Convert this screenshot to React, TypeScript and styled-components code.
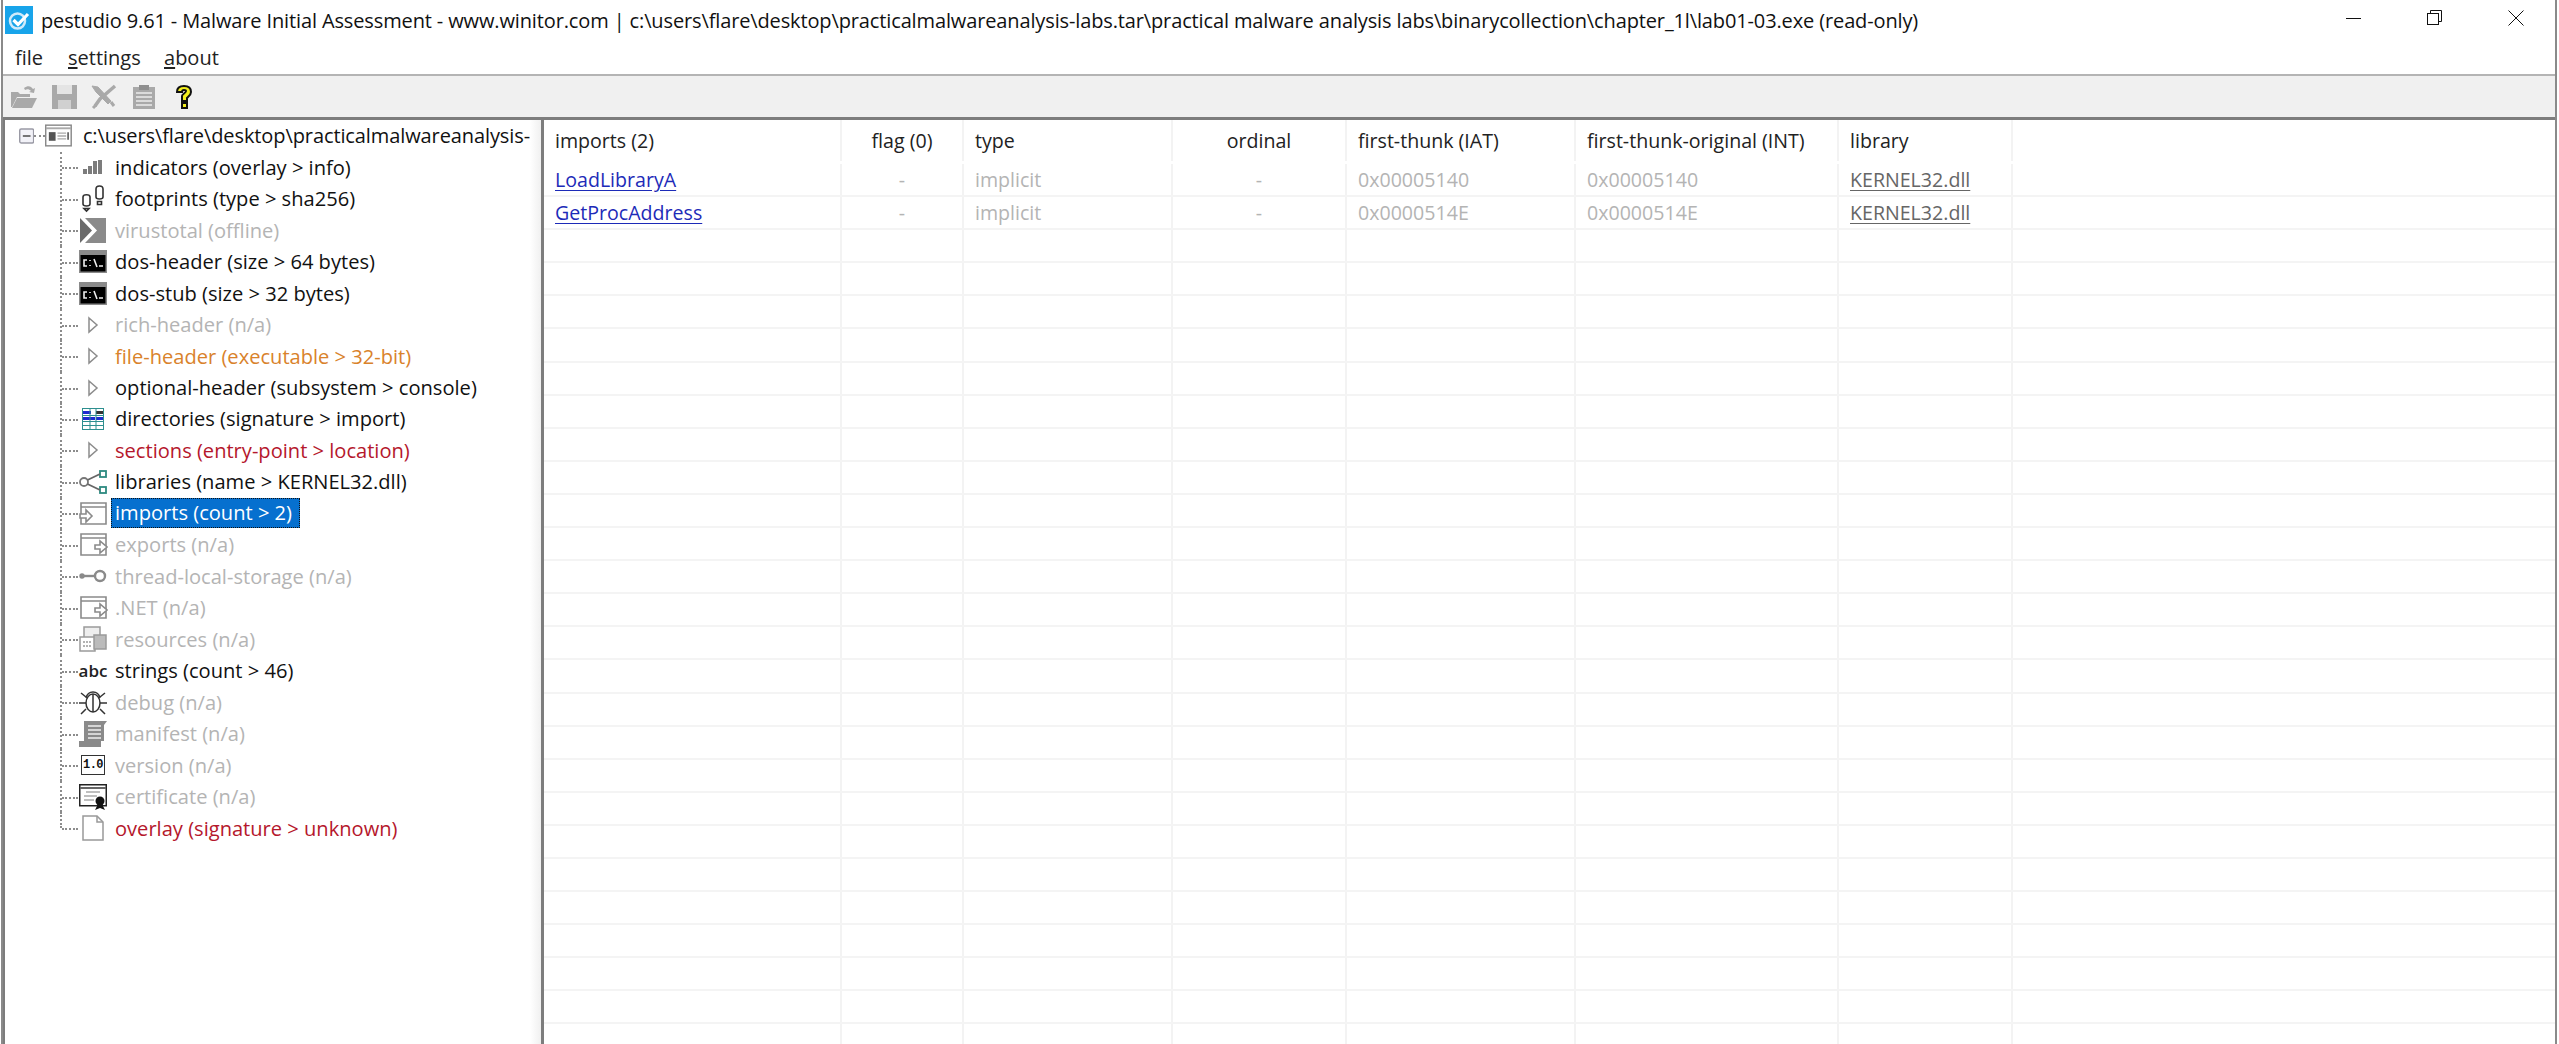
import React from 'react'
import styled, { createGlobalStyle } from 'styled-components'

const Global = createGlobalStyle`
  html, body { margin: 0; padding: 0; background: #fff; overflow: hidden; }
  body { font-family: "Open Sans", "Noto Sans", "Liberation Sans", sans-serif; color: #111; }
`
const Window = styled.div`
  width: 2559px;
  height: 1044px;
  display: flex;
  flex-direction: column;
  box-sizing: border-box;
  padding: 0 3px 0 2px;
  overflow: hidden;
  background: #fff;
  position: relative;
  &::before, &::after {
    content: '';
    position: absolute;
    top: 0;
    bottom: 0;
    width: 2px;
    background: #8a8a8a;
  }
  &::before { left: 1px; }
  &::after { right: 2px; }
`
const TitleBar = styled.div`
  height: 40px;
  flex: none;
  display: flex;
  align-items: center;
  padding-left: 3px;
  font-size: 20px;
  letter-spacing: -0.13px;
  white-space: nowrap;
  color: #111;
`
const TitleText = styled.span`
  margin-left: 8px;
  flex: 1;
`
const WinButtons = styled.div`
  display: flex;
  align-items: center;
  margin: 0 32px 4px 0;
  gap: 65px;
`
const MenuBar = styled.div`
  height: 36px;
  flex: none;
  display: flex;
  align-items: center;
  padding-left: 13px;
  gap: 19px;
  font-size: 20px;
  box-sizing: border-box;
  border-bottom: 2px solid #b4b4b4;
`
const MenuItem = styled.span<{ $w: number }>`
  width: ${p => p.$w}px;
  color: #222;
  u { text-underline-offset: 2px; }
`
const Toolbar = styled.div`
  height: 41px;
  flex: none;
  background: #f0f0f0;
  display: flex;
  align-items: center;
  padding-left: 2px;
  box-sizing: border-box;
`
const ToolSlot = styled.div`
  width: 40px;
  display: flex;
  justify-content: center;
`
const Panes = styled.div`
  flex: 1;
  min-height: 0;
  display: flex;
  background: #f4f4f4;
`
const TreePane = styled.div`
  width: 528px;
  flex: none;
  background: #fff;
  box-sizing: border-box;
  border-top: 3px solid #7d7d7d;
  border-left: 3px solid #7d7d7d;
`
const Gap = styled.div`
  width: 11px;
  flex: none;
  background: linear-gradient(to right, #fff, #f0f0f0);
  border-top: 3px solid #7d7d7d;
`
const ListPane = styled.div`
  flex: 1;
  min-width: 0;
  background: #fff;
  box-sizing: border-box;
  border-top: 3px solid #7d7d7d;
  border-left: 3px solid #7d7d7d;
  overflow: hidden;
`
const RootRow = styled.div`
  height: 31.5px;
  display: flex;
  align-items: center;
  font-size: 20px;
  letter-spacing: -0.1px;
  padding-left: 14px;
  white-space: nowrap;
  overflow: hidden;
  color: #111;
`
const RootStub = styled.span`
  width: 11px;
  border-top: 2px dotted #8c8c8c;
`
const RootLabel = styled.span`
  margin-left: 11px;
`
const TreeList = styled.div`
  display: flex;
  flex-direction: column;
`
const TreeRow = styled.div<{ $last?: boolean }>`
  height: 31.47px;
  display: flex;
  align-items: center;
  position: relative;
  padding-left: 73px;
  font-size: 20.1px;
  white-space: nowrap;
  &::before {
    content: '';
    position: absolute;
    left: 55px;
    top: 0;
    height: ${p => (p.$last ? '50%' : '100%')};
    border-left: 2px dotted #8c8c8c;
  }
  &::after {
    content: '';
    position: absolute;
    left: 57px;
    width: 16px;
    top: 50%;
    border-top: 2px dotted #8c8c8c;
  }
`
const IconSlot = styled.div`
  width: 30px;
  height: 28px;
  flex: none;
  display: flex;
  align-items: center;
  justify-content: center;
`
const TreeLabel = styled.span<{ $tone: string; $selected?: boolean }>`
  margin-left: ${p => (p.$selected ? '3px' : '7px')};
  color: ${p => (p.$selected ? '#fff' : p.$tone)};
  ${p =>
    p.$selected
      ? `background:#0670cf; outline: 1px dotted #111; outline-offset:-1px; padding: 0 8px 0 4px; line-height: 30px;`
      : ''}
`
const GridRow = styled.div<{ $head?: boolean }>`
  display: grid;
  grid-template-columns: 298px 122px 209px 174px 229px 263px 174px 1fr;
  height: ${p => (p.$head ? '44px' : '33.1px')};
  padding-bottom: ${p => (p.$head ? '3px' : '0')};
  box-sizing: border-box;
  border-bottom: ${p => (p.$head ? '0' : '2px solid #f4f4f4')};
  font-size: 19.6px;
  color: #222;
`
const Cell = styled.div<{ $center?: boolean; $tone?: string; $open?: boolean }>`
  display: flex;
  align-items: center;
  justify-content: ${p => (p.$center ? 'center' : 'flex-start')};
  padding-left: ${p => (p.$center ? '0' : '11px')};
  border-right: ${p => (p.$open ? '0' : '2px solid #f3f3f3')};
  color: ${p => p.$tone || 'inherit'};
  white-space: nowrap;
  overflow: hidden;
`
const FnLink = styled.span`
  color: #1d2bb8;
  text-decoration: underline;
  text-underline-offset: 3px;
`
const LibLink = styled.span`
  color: #666;
  text-decoration: underline;
  text-underline-offset: 3px;
`

const G = '#a9a9a9'

const Minimize = () => (
  <svg width="16" height="16" viewBox="0 0 16 16"><path d="M0 8.5h15" stroke="#111" strokeWidth="1" /></svg>
)
const Restore = () => (
  <svg width="16" height="16" viewBox="0 0 16 16" fill="none" stroke="#111" strokeWidth="1">
    <rect x="0.5" y="3.5" width="11" height="11" />
    <path d="M3.5 3.5V0.5h11v11h-3" />
  </svg>
)
const CloseIcon = () => (
  <svg width="16" height="16" viewBox="0 0 16 16"><path d="M0.5 0.5l15 15M15.5 0.5l-15 15" stroke="#111" strokeWidth="1" /></svg>
)
const AppIcon = () => (
  <svg width="28" height="28" viewBox="0 0 28 28">
    <rect width="28" height="28" fill="#18a4ea" />
    <circle cx="12.5" cy="15" r="7.5" fill="none" stroke="#cfeafa" strokeWidth="2.5" />
    <path d="M8.5 14l4.5 4.5L23 8" fill="none" stroke="#fff" strokeWidth="3.2" />
  </svg>
)
const OpenIcon = () => (
  <svg width="28" height="26" viewBox="0 0 28 26" fill={G}>
    <path d="M1 8h7l2 2h10v3H7l-5 10H1z" />
    <path d="M7 14h20l-5 10H2z" />
    <path d="M14 4c4-3 7-2 9 1l2-1-1 5-5-1 2-1c-2-2-4-2-6-1z" />
  </svg>
)
const SaveIcon = () => (
  <svg width="25" height="25" viewBox="0 0 25 25">
    <path d="M0 1h25v24H0z" fill={G} />
    <rect x="5" y="1" width="15" height="9" fill="#e4e4e4" />
    <rect x="6" y="16" width="13" height="9" fill="#d0d0d0" />
  </svg>
)
const CutIcon = () => (
  <svg width="26" height="26" viewBox="0 0 26 26" fill="none" stroke={G}>
    <path d="M1 2l6 1 13 14-3 3L5 8z" fill={G} strokeWidth="1" />
    <path d="M24 2L9 15l-5 7" strokeWidth="3.5" />
    <path d="M2 24l3-3M20 18l3 4" strokeWidth="3" />
  </svg>
)
const ClipIcon = () => (
  <svg width="22" height="24" viewBox="0 0 22 24">
    <rect x="0" y="2" width="22" height="22" fill={G} />
    <rect x="6" y="0" width="10" height="5" fill="#8f8f8f" />
    <path d="M3 8h16M3 12h16M3 16h16M3 20h16" stroke="#ececec" strokeWidth="1.5" />
  </svg>
)
const HelpIcon = () => (
  <svg width="20" height="26" viewBox="0 0 20 26">
    <path
      d="M3 8c0-4 3-6 7-6s7 2 7 6c0 3-2 4-4 6v3H8v-5c0-2 4-3 4-5 0-1-1-1-2-1S8 6 8 8zM8 19h5v5H8z"
      fill="#f2ee1e"
      stroke="#111"
      strokeWidth="2"
    />
  </svg>
)
const MinusBox = () => (
  <svg width="16" height="16" viewBox="0 0 16 16">
    <rect x="0.75" y="0.75" width="14.5" height="14.5" rx="1.5" fill="#f2f2f8" stroke="#9a9aa5" strokeWidth="1.5" />
    <path d="M4 8h8" stroke="#444" strokeWidth="1.5" />
  </svg>
)
const RootIcon = () => (
  <svg width="28" height="23" viewBox="0 0 28 23">
    <rect x="0.75" y="0.75" width="26.5" height="21.5" fill="#fff" stroke="#8a8a8a" strokeWidth="1.5" />
    <path d="M1 4h26" stroke="#aaa" strokeWidth="2" />
    <rect x="4" y="8" width="7" height="9" fill="#555" />
    <path d="M13 9h9M13 12h9M13 15h9" stroke="#aaa" strokeWidth="1.5" />
    <path d="M24 8v8" stroke="#444" strokeWidth="1.5" />
  </svg>
)
const Indicators = () => (
  <svg width="20" height="14" viewBox="0 0 20 14" fill="#7c7c7c">
    <rect x="0" y="9" width="4" height="5" /><rect x="5" y="6" width="4" height="8" />
    <rect x="10" y="1" width="4" height="13" /><rect x="15" y="0" width="4" height="14" />
  </svg>
)
const Footprints = () => (
  <svg width="24" height="28" viewBox="0 0 24 28" fill="none" stroke="#333" strokeWidth="1.6">
    <path d="M2 12c0-3 7-3 7 0v7c0 1-1 2-3.500 2S2 20 2 19zM3 23.500h5l-2.500 2.500z" />
    <path d="M15 4c0-4 7-4 7 0v8c0 1-1 2-3.500 2S15 13 15 12zM16.500 16.500h4v3h-4z" />
  </svg>
)
const VirusTotal = () => (
  <svg width="26" height="25" viewBox="0 0 26 25" fill="#6a6a6a">
    <path d="M0 0l12 12.500L0 25z" />
    <path d="M5 0h21v25H5l12-12.500z" fill="#8a8a8a" />
  </svg>
)
const Console = () => (
  <svg width="28" height="23" viewBox="0 0 28 23">
    <rect width="28" height="23" fill="#8a8a8a" />
    <rect x="1.5" y="5" width="25" height="16.500" fill="#000" />
    <path d="M8 10H5v6h3M11 10v1M11 15v1M15 9l3 8M20 16h4" stroke="#eee" strokeWidth="1.6" fill="none" />
  </svg>
)
const Arrow = () => (
  <svg width="12" height="18" viewBox="0 0 12 18">
    <path d="M2 2l8 7-8 7z" fill="#fff" stroke="#8c8c8c" strokeWidth="1.5" />
  </svg>
)
const Directories = () => (
  <svg width="22" height="22" viewBox="0 0 22 22">
    <rect x="0.5" y="0.5" width="21" height="21" fill="#fff" stroke="#2d8f8f" />
    <rect x="1" y="3" width="8" height="3" fill="#1c2bd0" /><rect x="1" y="9" width="12" height="3" fill="#1c2bd0" />
    <rect x="14" y="3" width="7" height="3" fill="#333" /><rect x="14" y="9" width="7" height="3" fill="#1c2bd0" />
    <path d="M1 7.500h20M1 13.500h20M1 17.500h20M8 1v20M14 1v20" stroke="#2d8f8f" />
  </svg>
)
const Libraries = () => (
  <svg width="28" height="24" viewBox="0 0 28 24" fill="none" stroke="#2d8a80" strokeWidth="1.8">
    <rect x="21" y="1" width="6" height="6" /><rect x="21" y="17" width="6" height="6" />
    <circle cx="5" cy="12" r="4" stroke="#777" />
    <path d="M8.500 10L21 4M8.500 14L21 20" stroke="#666" />
  </svg>
)
const PageIcon = ({ imp }: { imp?: boolean }) => (
  <svg width="29" height="23" viewBox="0 0 29 23" fill="none" stroke="#8a8a8a" strokeWidth="1.6">
    <path d="M2 1h25v21H2zM2 5h25" />
    <path
      d={imp ? 'M1 12h6V8l6 6-6 6v-4H1z' : 'M16 12h5V8l7 6-7 6v-4h-5z'}
      fill="#fff"
    />
  </svg>
)
const Key = () => (
  <svg width="28" height="14" viewBox="0 0 28 14" fill="none" stroke="#8a8a8a" strokeWidth="2.4">
    <circle cx="21" cy="7" r="5" />
    <path d="M2 7h14" />
    <circle cx="3" cy="7" r="1.500" />
  </svg>
)
const Resources = () => (
  <svg width="28" height="26" viewBox="0 0 28 26" fill="none" stroke="#9a9a9a" strokeWidth="1.5">
    <rect x="5" y="1" width="16" height="12" fill="#eee" />
    <rect x="1" y="11" width="15" height="14" fill="#fff" />
    <path d="M4 16h9M4 20h9" strokeDasharray="2 1" />
    <rect x="15" y="9" width="12" height="14" fill="#bbb" />
  </svg>
)
const Bug = () => (
  <svg width="30" height="26" viewBox="0 0 30 26" fill="none" stroke="#333" strokeWidth="1.5">
    <ellipse cx="15" cy="14" rx="7" ry="9" />
    <path d="M8 9c1-4 3-6 7-6s6 2 7 6M15 5v18M8 8L3 4M22 8l5-4M8 14H1M22 14h7M8 20l-5 5M22 20l5 5" />
  </svg>
)
const Manifest = () => (
  <svg width="28" height="26" viewBox="0 0 28 26" fill="#8a8a8a">
    <path d="M5 0h23l-3 4v16H5z" />
    <path d="M9 5h13M9 9h13M9 13h13M9 17h13" stroke="#eee" strokeWidth="1.5" />
    <path d="M0 20h22v6H0z" />
  </svg>
)
const VersionBox = styled.span`
  width: 24px;
  height: 20px;
  box-sizing: border-box;
  border: 1.5px solid #333;
  background: #fff;
  font: bold 12px "Liberation Mono", monospace;
  letter-spacing: -0.5px;
  color: #111;
  display: flex;
  align-items: center;
  justify-content: center;
`
const Certificate = () => (
  <svg width="28" height="26" viewBox="0 0 28 26">
    <rect x="0.75" y="0.75" width="26.5" height="21" fill="#fff" stroke="#222" strokeWidth="1.5" />
    <path d="M1 4h26" stroke="#666" strokeWidth="2" />
    <path d="M7 8h14M5 12h13M5 16h10" stroke="#aaa" strokeWidth="1.5" />
    <circle cx="21" cy="17" r="4.500" fill="#111" />
    <path d="M16 26l3-6h4l3 6-5-2z" fill="#111" />
  </svg>
)
const FileIcon = () => (
  <svg width="22" height="26" viewBox="0 0 22 26">
    <path d="M1 1h14l6 6v18H1z" fill="#fff" stroke="#999" strokeWidth="1.5" />
    <path d="M15 1v6h6" fill="none" stroke="#999" strokeWidth="1.5" />
  </svg>
)
const Abc = styled.span`
  font-size: 17px;
  font-weight: 600;
  color: #222;
`

const BLACK = '#111'
const GREY = '#b4b4b4'
const RED = '#b5172c'
const ORANGE = '#d9822b'

const tree: { label: string; tone: string; icon: React.ReactNode; selected?: boolean }[] = [
  { label: 'indicators (overlay > info)', tone: BLACK, icon: <Indicators /> },
  { label: 'footprints (type > sha256)', tone: BLACK, icon: <Footprints /> },
  { label: 'virustotal (offline)', tone: GREY, icon: <VirusTotal /> },
  { label: 'dos-header (size > 64 bytes)', tone: BLACK, icon: <Console /> },
  { label: 'dos-stub (size > 32 bytes)', tone: BLACK, icon: <Console /> },
  { label: 'rich-header (n/a)', tone: GREY, icon: <Arrow /> },
  { label: 'file-header (executable > 32-bit)', tone: ORANGE, icon: <Arrow /> },
  { label: 'optional-header (subsystem > console)', tone: BLACK, icon: <Arrow /> },
  { label: 'directories (signature > import)', tone: BLACK, icon: <Directories /> },
  { label: 'sections (entry-point > location)', tone: RED, icon: <Arrow /> },
  { label: 'libraries (name > KERNEL32.dll)', tone: BLACK, icon: <Libraries /> },
  { label: 'imports (count > 2)', tone: BLACK, icon: <PageIcon imp />, selected: true },
  { label: 'exports (n/a)', tone: GREY, icon: <PageIcon /> },
  { label: 'thread-local-storage (n/a)', tone: GREY, icon: <Key /> },
  { label: '.NET (n/a)', tone: GREY, icon: <PageIcon /> },
  { label: 'resources (n/a)', tone: GREY, icon: <Resources /> },
  { label: 'strings (count > 46)', tone: BLACK, icon: <Abc>abc</Abc> },
  { label: 'debug (n/a)', tone: GREY, icon: <Bug /> },
  { label: 'manifest (n/a)', tone: GREY, icon: <Manifest /> },
  { label: 'version (n/a)', tone: GREY, icon: <VersionBox>1.0</VersionBox> },
  { label: 'certificate (n/a)', tone: GREY, icon: <Certificate /> },
  { label: 'overlay (signature > unknown)', tone: RED, icon: <FileIcon /> },
]

const imports = [
  { name: 'LoadLibraryA', iat: '0x00005140', int: '0x00005140' },
  { name: 'GetProcAddress', iat: '0x0000514E', int: '0x0000514E' },
]
const emptyRows = Array.from({ length: 25 }, (_, i) => i)

export default function App() {
  return (
    <Window>
      <Global />
      <TitleBar>
        <AppIcon />
        <TitleText>
          pestudio 9.61 - Malware Initial Assessment - www.winitor.com | c:\users\flare\desktop\practicalmalwareanalysis-labs.tar\practical malware analysis labs\binarycollection\chapter_1l\lab01-03.exe (read-only)
        </TitleText>
        <WinButtons>
          <Minimize />
          <Restore />
          <CloseIcon />
        </WinButtons>
      </TitleBar>
      <MenuBar>
        <MenuItem $w={34}>file</MenuItem>
        <MenuItem $w={77}><u>s</u>ettings</MenuItem>
        <MenuItem $w={60}><u>a</u>bout</MenuItem>
      </MenuBar>
      <Toolbar>
        <ToolSlot><OpenIcon /></ToolSlot>
        <ToolSlot><SaveIcon /></ToolSlot>
        <ToolSlot><CutIcon /></ToolSlot>
        <ToolSlot><ClipIcon /></ToolSlot>
        <ToolSlot><HelpIcon /></ToolSlot>
      </Toolbar>
      <Panes>
        <TreePane>
          <RootRow>
            <MinusBox />
            <RootStub />
            <RootIcon />
            <RootLabel>c:\users\flare\desktop\practicalmalwareanalysis-</RootLabel>
          </RootRow>
          <TreeList>
            {tree.map((n, i) => (
              <TreeRow key={n.label} $last={i === tree.length - 1}>
                <IconSlot>{n.icon}</IconSlot>
                <TreeLabel $tone={n.tone} $selected={n.selected}>{n.label}</TreeLabel>
              </TreeRow>
            ))}
          </TreeList>
        </TreePane>
        <Gap />
        <ListPane>
          <GridRow $head>
            <Cell>imports (2)</Cell>
            <Cell $center>flag (0)</Cell>
            <Cell>type</Cell>
            <Cell $center>ordinal</Cell>
            <Cell>first-thunk (IAT)</Cell>
            <Cell>first-thunk-original (INT)</Cell>
            <Cell>library</Cell>
            <Cell $open />
          </GridRow>
          {imports.map(r => (
            <GridRow key={r.name}>
              <Cell><FnLink>{r.name}</FnLink></Cell>
              <Cell $center $tone={GREY}>-</Cell>
              <Cell $tone={GREY}>implicit</Cell>
              <Cell $center $tone={GREY}>-</Cell>
              <Cell $tone={GREY}>{r.iat}</Cell>
              <Cell $tone={GREY}>{r.int}</Cell>
              <Cell><LibLink>KERNEL32.dll</LibLink></Cell>
              <Cell $open />
            </GridRow>
          ))}
          {emptyRows.map(i => (
            <GridRow key={i}>
              <Cell /><Cell /><Cell /><Cell /><Cell /><Cell /><Cell /><Cell $open />
            </GridRow>
          ))}
        </ListPane>
      </Panes>
    </Window>
  )
}
